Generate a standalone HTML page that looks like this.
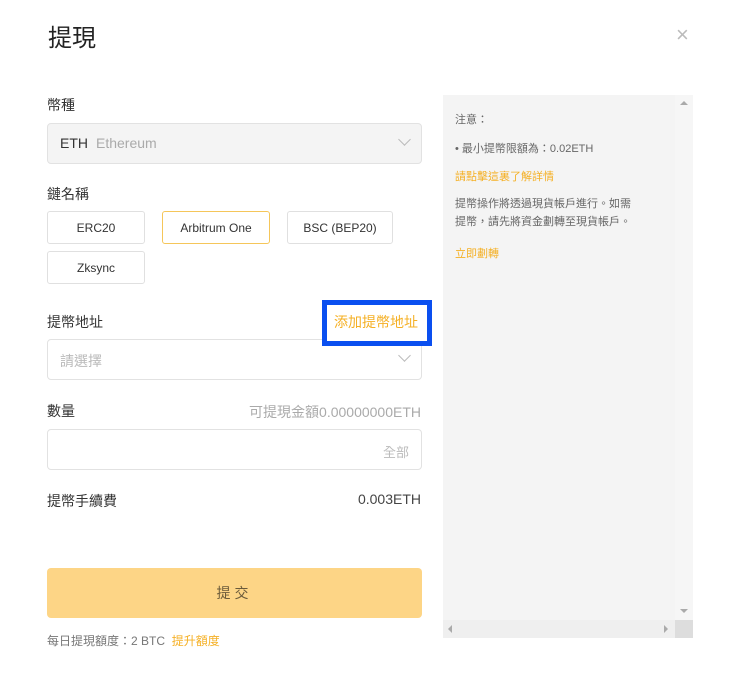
<!DOCTYPE html>
<html><head><meta charset="utf-8"><style>
*{box-sizing:border-box;margin:0;padding:0}
body{width:740px;height:674px;background:#fff;font-family:"Liberation Sans","Noto Sans CJK TC",sans-serif;position:relative;overflow:hidden;color:#333}
.a{position:absolute}
.lbl{font-size:14px;color:#333}
.box{border:1px solid #e2e2e2;border-radius:4px}
.chip{position:absolute;border:1px solid #e0e0e0;border-radius:3px;font-size:12px;color:#333;display:flex;align-items:center;justify-content:center;height:33px}
.chev{position:absolute;right:12px;top:13px;width:9px;height:9px;border-right:1px solid #bbb;border-bottom:1px solid #bbb;transform:rotate(45deg)}
.ptxt{font-size:11px;color:#666}
</style></head><body>
<div class="a" style="left:48px;top:18px;font-size:24px;color:#222">提現</div>
<div class="a" style="left:676px;top:22px;font-size:22px;color:#bbb;font-weight:300">×</div>

<div class="a lbl" style="left:47px;top:95px">幣種</div>
<div class="a box" style="left:47px;top:123px;width:375px;height:41px;background:#f4f4f4"><span style="position:absolute;left:12px;top:11px;font-size:14px;color:#333">ETH</span><span style="position:absolute;left:48px;top:11px;font-size:14px;color:#aaa">Ethereum</span><div class="chev" style="top:11px"></div></div>

<div class="a lbl" style="left:47px;top:184px">鏈名稱</div>
<div class="chip" style="left:47px;top:211px;width:98px">ERC20</div>
<div class="chip" style="left:162px;top:211px;width:108px;border-color:#f5c65a">Arbitrum One</div>
<div class="chip" style="left:287px;top:211px;width:106px">BSC (BEP20)</div>
<div class="chip" style="left:47px;top:251px;width:98px">Zksync</div>

<div class="a lbl" style="left:47px;top:312px">提幣地址</div>
<div class="a box" style="left:47px;top:339px;width:375px;height:41px"><span style="position:absolute;left:12px;top:11px;font-size:14px;color:#bbb">請選擇</span><div class="chev" style="top:11px"></div></div>
<div class="a" style="left:322px;top:300px;width:110px;height:46px;border:5px solid #0a4ff0;background:#fff"></div>
<div class="a" style="left:334px;top:312px;font-size:14px;color:#f5b025">添加提幣地址</div>

<div class="a lbl" style="left:47px;top:401px">數量</div>
<div class="a" style="right:319px;top:402px;font-size:14px;color:#aaa">可提現金額0.00000000ETH</div>
<div class="a box" style="left:47px;top:429px;width:375px;height:41px"><span style="position:absolute;right:12px;top:12px;font-size:13px;color:#bbb">全部</span></div>

<div class="a lbl" style="left:47px;top:491px">提幣手續費</div>
<div class="a" style="right:319px;top:491px;font-size:14px;color:#444">0.003ETH</div>

<div class="a" style="left:47px;top:568px;width:375px;height:50px;background:#fdd586;border-radius:4px;font-size:14px;color:#6a5a3a;display:flex;align-items:center;justify-content:center;letter-spacing:4px">提交</div>
<div class="a" style="left:47px;top:632px;font-size:12px;color:#777">每日提現額度：2 BTC&nbsp; <span style="color:#f5b025">提升額度</span></div>

<div class="a" style="left:443px;top:95px;width:250px;height:543px;background:#f4f4f4">
 <div class="a" style="right:0;top:0;width:18px;height:525px;background:#f6f6f6"></div>
 <div class="a" style="left:0;bottom:0;width:232px;height:18px;background:#efefef"></div>
 <div class="a" style="right:0;bottom:0;width:18px;height:18px;background:#ddd"></div>
 <div class="a" style="right:5px;top:6px;width:0;height:0;border-left:4px solid transparent;border-right:4px solid transparent;border-bottom:4px solid #aaa"></div>
 <div class="a" style="right:5px;top:514px;width:0;height:0;border-left:4px solid transparent;border-right:4px solid transparent;border-top:4px solid #aaa"></div>
 <div class="a" style="left:5px;top:530px;width:0;height:0;border-top:4px solid transparent;border-bottom:4px solid transparent;border-right:4px solid #aaa"></div>
 <div class="a" style="left:221px;top:530px;width:0;height:0;border-top:4px solid transparent;border-bottom:4px solid transparent;border-left:4px solid #aaa"></div>
 <div class="a ptxt" style="left:12px;top:16px">注意：</div>
 <div class="a ptxt" style="left:12px;top:45px">• 最小提幣限額為：0.02ETH</div>
 <div class="a" style="left:12px;top:73px;font-size:11px;color:#f5b025">請點擊這裏了解詳情</div>
 <div class="a ptxt" style="left:12px;top:100px;line-height:18px;width:205px">提幣操作將透過現貨帳戶進行。如需<br>提幣，請先將資金劃轉至現貨帳戶。</div>
 <div class="a" style="left:12px;top:150px;font-size:11px;color:#f5b025">立即劃轉</div>
</div>
</body></html>
